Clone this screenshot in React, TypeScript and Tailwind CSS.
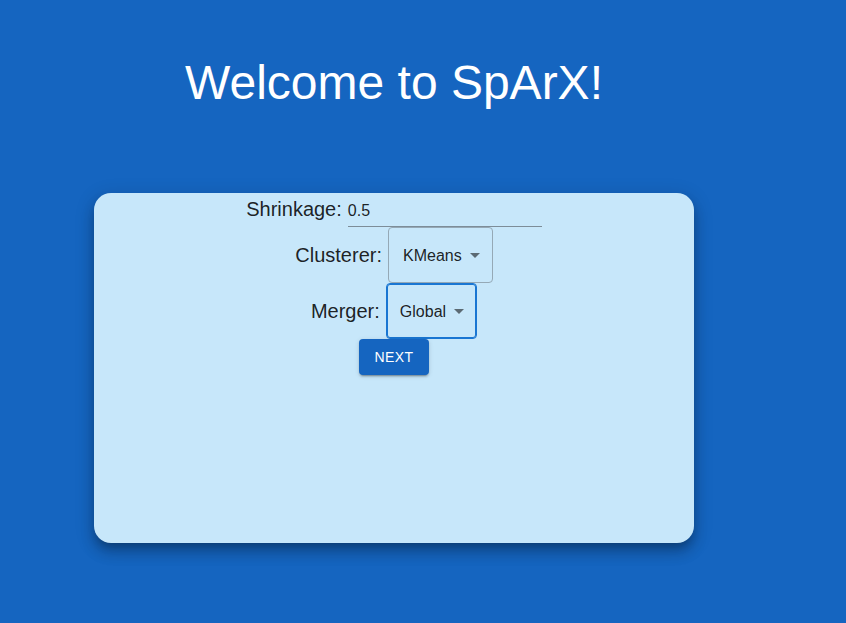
import React from 'react'

function ArrowDrop() {
  return (
    <svg width="24" height="24" viewBox="0 0 24 24" className="shrink-0 fill-[rgba(0,0,0,0.54)]">
      <path d="M7 10l5 5 5-5z" />
    </svg>
  )
}

function Select({ value, focused }: { value: string; focused?: boolean }) {
  return (
    <div
      className={
        focused
          ? 'flex items-center h-[56px] rounded-[4px] border border-[#1976d2] shadow-[inset_0_0_0_1px_#1976d2] pl-[13px] pr-[5px]'
          : 'flex items-center h-[56px] rounded-[4px] border border-[#95a9b6] pl-[14px] pr-[5px]'
      }
    >
      <span className="text-[16px] leading-[19px] text-[rgba(0,0,0,0.87)]">{value}</span>
      <span className="ml-[1px] flex">
        <ArrowDrop />
      </span>
    </div>
  )
}

export default function App() {
  return (
    <div className="min-h-screen bg-[#1565c0] font-['Liberation_Sans',Arial,sans-serif]">
      <div className="ml-[94px] w-[600px] flex flex-col items-center">
        <h1 className="mt-[55px] text-[48px] leading-[56px] text-white font-normal">
          Welcome to SpArX!
        </h1>

        <div className="mt-[82px] w-[600px] h-[350px] rounded-[17px] bg-[#c7e7fa] shadow-[0_6px_8px_-3px_rgba(0,0,0,0.22),0_10px_14px_1px_rgba(0,0,0,0.14),0_4px_18px_3px_rgba(0,0,0,0.12)] flex flex-col items-center text-[rgba(0,0,0,0.87)]">
          <div className="flex pt-[5px] h-[34px]">
            <span className="text-[20px] leading-[23px]">Shrinkage:</span>
            <div className="ml-[6px] w-[194px] h-[29px] border-b border-[#7d8d98] pt-[3px] text-[16px] leading-[19px]">
              0.5
            </div>
          </div>

          <div className="flex items-center gap-[6px] h-[56px]">
            <span className="text-[20px] leading-[23px] pt-[1px]">Clusterer:</span>
            <Select value="KMeans" />
          </div>

          <div className="flex items-center gap-[6px] h-[56px]">
            <span className="text-[20px] leading-[23px] pt-[1px]">Merger:</span>
            <Select value="Global" focused />
          </div>

          <button className="h-[36px] px-[16px] rounded-[4px] bg-[#1565c0] text-white text-[14px] tracking-[0.4px] uppercase shadow-[0_3px_1px_-2px_rgba(0,0,0,0.2),0_2px_2px_0_rgba(0,0,0,0.14),0_1px_5px_0_rgba(0,0,0,0.12)]">
            Next
          </button>
        </div>
      </div>
    </div>
  )
}
